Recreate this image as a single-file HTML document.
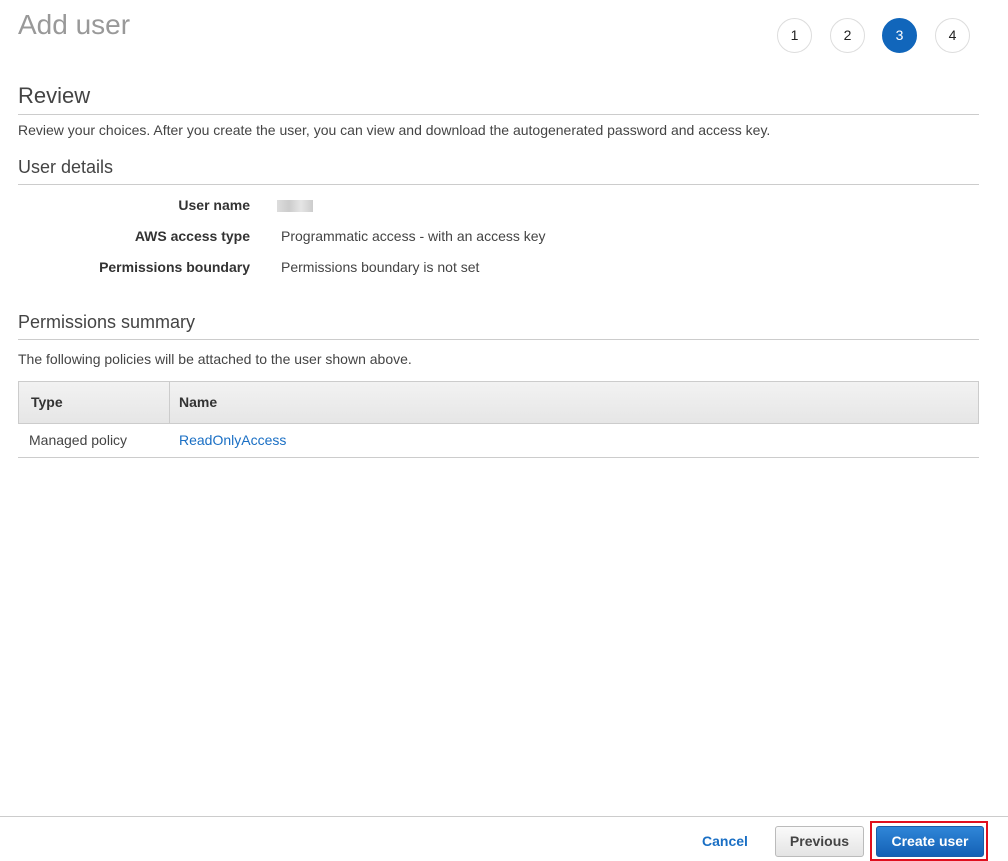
<!DOCTYPE html>
<html><head><style>
body{margin:0;width:1008px;height:861px;background:#fff;font-family:"Liberation Sans",Arial,sans-serif;color:#444;position:relative;overflow:hidden}
.a{position:absolute;white-space:nowrap}
.c{position:absolute;width:33px;height:33px;border:1px solid #ddd;border-radius:50%;text-align:center;line-height:33px;font-size:14px;color:#222;top:18px}
.hr{position:absolute;left:18px;width:961px;height:1px;background:#ccc}
.l{position:absolute;right:758px;font-weight:bold;font-size:14px;color:#333}
.v{position:absolute;left:281px;font-size:14px;color:#444}
</style></head><body>
<div class="a" style="left:18px;top:9px;font-size:28px;color:#999">Add user</div>
<div class="c" style="left:777px">1</div>
<div class="c" style="left:830px">2</div>
<div class="c" style="left:882px;background:#1166bb;border-color:#1166bb;color:#fff">3</div>
<div class="c" style="left:935px">4</div>
<div class="a" style="left:18px;top:83px;font-size:22px;color:#444">Review</div>
<div class="hr" style="top:114px"></div>
<div class="a" style="left:18px;top:122px;font-size:14px">Review your choices. After you create the user, you can view and download the autogenerated password and access key.</div>
<div class="a" style="left:18px;top:157px;font-size:18px">User details</div>
<div class="hr" style="top:184px"></div>
<div class="l" style="top:197px">User name</div>
<div class="a" style="left:277px;top:200px;width:36px;height:12px;background:linear-gradient(90deg,#ddd,#ccc,#e5e5e5,#ccc)"></div>
<div class="l" style="top:228px">AWS access type</div>
<div class="v" style="top:228px">Programmatic access - with an access key</div>
<div class="l" style="top:259px">Permissions boundary</div>
<div class="v" style="top:259px">Permissions boundary is not set</div>
<div class="a" style="left:18px;top:312px;font-size:18px">Permissions summary</div>
<div class="hr" style="top:339px"></div>
<div class="a" style="left:18px;top:351px;font-size:14px">The following policies will be attached to the user shown above.</div>
<div class="a" style="left:18px;top:381px;width:959px;height:41px;border:1px solid #ccc;background:linear-gradient(#f2f2f2,#e6e6e6)"></div>
<div class="a" style="left:169px;top:382px;width:1px;height:41px;background:#ccc"></div>
<div class="a" style="left:31px;top:394px;font-size:14px;font-weight:bold;color:#333">Type</div>
<div class="a" style="left:179px;top:394px;font-size:14px;font-weight:bold;color:#333">Name</div>
<div class="a" style="left:29px;top:432px;font-size:14px">Managed policy</div>
<div class="a" style="left:179px;top:432px;font-size:14px;color:#1a6fc4">ReadOnlyAccess</div>
<div class="hr" style="top:457px"></div>
<div class="a" style="left:0;top:816px;width:1008px;height:1px;background:#ccc"></div>
<div class="a" style="left:702px;top:833px;font-size:14px;font-weight:bold;color:#1a6fc4">Cancel</div>
<div class="a" style="left:775px;top:826px;width:87px;height:29px;border:1px solid #bbb;border-radius:3px;background:linear-gradient(#fafafa,#e4e4e4);text-align:center;line-height:29px;font-size:14px;font-weight:bold;color:#444">Previous</div>
<div class="a" style="left:870px;top:821px;width:114px;height:36px;border:2px solid #e0101e"></div>
<div class="a" style="left:876px;top:826px;width:106px;height:29px;border:1px solid #1a5ea8;border-radius:3px;background:linear-gradient(#2f86d8,#1461b5);text-align:center;line-height:29px;font-size:14px;font-weight:bold;color:#fff">Create user</div>
</body></html>
